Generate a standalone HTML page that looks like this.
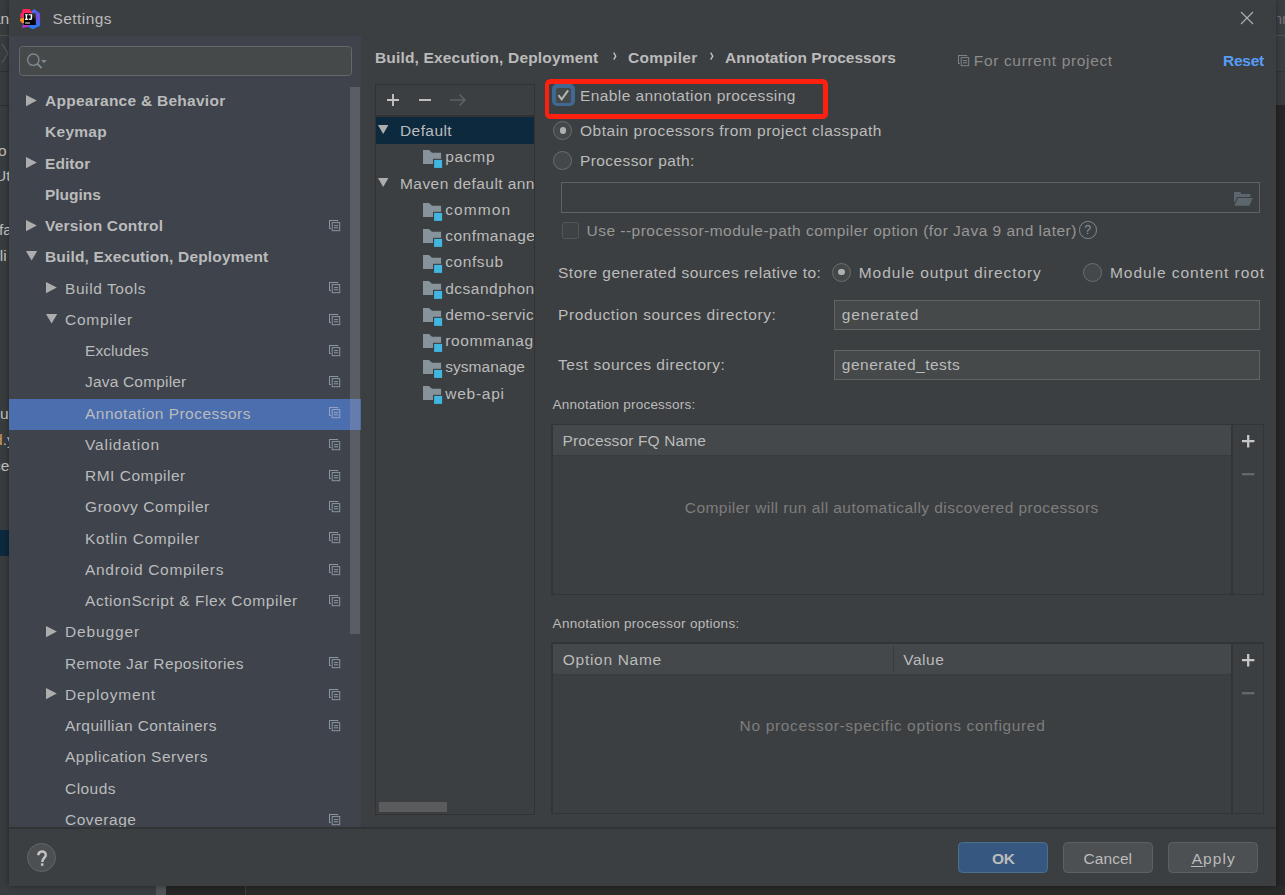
<!DOCTYPE html>
<html><head><meta charset="utf-8"><title>Settings</title>
<style>
html,body{margin:0;padding:0;background:#2b2b2b;overflow:hidden;}
body{width:1285px;height:895px;position:relative;overflow:hidden;font-family:"Liberation Sans",sans-serif;font-size:15.5px;color:#bbbbbb;}
.a{position:absolute;box-sizing:border-box;}
.t{position:absolute;white-space:nowrap;z-index:1;}
svg{position:absolute;overflow:visible;}
</style></head><body>
<!-- ===== IDE behind the dialog ===== -->
<div class="a" style="left:0;top:0;width:1285px;height:895px;background:#3c3f41;"></div>
<!-- left strip -->
<div class="a" style="left:0;top:0;width:9px;height:886px;background:#393c3e;"></div>
<div class="a" style="left:0;top:35px;width:9px;height:1px;background:#4f5254;"></div>
<div class="a" style="left:0;top:71px;width:9px;height:1px;background:#2c2e2f;"></div>
<div class="a" style="left:0;top:105px;width:9px;height:1px;background:#2c2e2f;"></div>
<div class="a" style="left:0;top:530px;width:9px;height:26px;background:#0d293e;"></div>
<div class="a" style="left:0;top:0;width:9px;height:886px;overflow:hidden;">
<div class="t" style="line-height:20px;height:20px;left:-8px;top:9px;font-size:15.5px;">an</div>
<div class="t" style="line-height:20px;height:20px;left:-5.5px;top:140.5px;font-size:15.5px;">lo</div>
<div class="t" style="line-height:20px;height:20px;left:-5px;top:165.5px;font-size:15.5px;">Ut</div>
<div class="t" style="line-height:20px;height:20px;left:-1px;top:219.5px;font-size:15.5px;">fa</div>
<div class="t" style="line-height:20px;height:20px;left:-10.5px;top:245.5px;font-size:15.5px;">Ali</div>
<div class="t" style="line-height:20px;height:20px;left:-8.5px;top:403.5px;font-size:15.5px;">our</div>
<div class="t" style="line-height:20px;height:20px;left:-6px;top:429.5px;font-size:15.5px;color:#a8adb0;"><span style="color:#cc9a62">d</span>.y</div>
<div class="t" style="line-height:20px;height:20px;left:-7px;top:455.5px;font-size:15.5px;">ce</div>
</div>
<svg style="left:0;top:42px;" width="9" height="22"><path d="M2 1.8 L8 11.3 L2 20.8" fill="none" stroke="#565a5c" stroke-width="1.2"/></svg>
<!-- right strip -->
<div class="a" style="left:1276px;top:35px;width:9px;height:1px;background:#515151;"></div>
<div class="a" style="left:1276px;top:71px;width:9px;height:1px;background:#323232;"></div>
<div class="a" style="left:1276px;top:72px;width:9px;height:33px;background:#393b3d;"></div>
<div class="a" style="left:1276px;top:105px;width:9px;height:790px;background:#262626;"></div>
<div class="a" style="left:1276.5px;top:0;width:9px;height:40px;overflow:hidden;"><div class="t" style="line-height:20px;height:20px;left:-3px;top:8.5px;font-size:15.5px;color:#6e7071;">nr</div></div>
<!-- bottom strip -->
<div class="a" style="left:0;top:886px;width:157px;height:9px;background:#3a3d3f;"></div>
<div class="a" style="left:156.4px;top:886px;width:9.3px;height:9px;background:#505456;"></div>
<div class="a" style="left:165.7px;top:886px;width:1120px;height:9px;background:#272727;"></div>
<div class="a" style="left:246px;top:886px;width:1039px;height:9px;background:#2a2a2a;"></div>
<div class="a" style="left:245px;top:886px;width:1px;height:9px;background:#3e3e3e;"></div>
<!-- ===== dialog ===== -->
<div class="a" style="left:9px;top:0;width:1267px;height:886px;background:#3c3f41;box-shadow:0 0 6px rgba(0,0,0,0.4);"></div>
<!-- app icon -->
<svg style="left:16px;top:4px;" width="30" height="30" viewBox="0 0 895 895">
<defs><linearGradient id="ijb" x1="0" y1="0" x2="0" y2="1"><stop offset="0" stop-color="#3a70f3"/><stop offset="0.42" stop-color="#7a4ce0"/><stop offset="0.8" stop-color="#3273f5"/><stop offset="1" stop-color="#2f7df7"/></linearGradient>
<linearGradient id="ijk" x1="1" y1="0" x2="0.3" y2="0.7"><stop offset="0" stop-color="#4a4a4a"/><stop offset="0.55" stop-color="#0a0a0a"/><stop offset="1" stop-color="#000"/></linearGradient>
<linearGradient id="ijp" x1="0" y1="0" x2="0" y2="1"><stop offset="0" stop-color="#ff2650"/><stop offset="1" stop-color="#f02a7a"/></linearGradient></defs>
<polygon points="205,146 400,152 478,240 478,300 250,300 250,425 118,388 138,300 172,250" fill="url(#ijp)"/>
<polygon points="250,412 250,565 188,572 116,492 138,418" fill="#fc8a1c"/>
<polygon points="540,146 718,285 718,648 492,750 356,674 420,615 580,615 580,285 470,285 470,212" fill="url(#ijb)"/>
<polygon points="245,595 430,615 360,676 172,718 198,640" fill="#b036cc"/>
<rect x="240" y="274" width="352" height="352" fill="url(#ijk)"/>
<path d="M266 303h88v36h-22v100h22v36h-88v-36h22v-100h-22z" fill="#fff"/>
<path d="M376 303h106v120c0 38-24 54-58 54-30 0-48-10-60-28l28-26c8 10 16 16 28 16 12 0 18-6 18-22v-78h-62z" fill="#fff"/>
<rect x="270" y="545" width="146" height="44" fill="#a6a6a6"/>
</svg>
<!-- close X -->
<svg style="left:1240px;top:11px;" width="14" height="14"><path d="M1 1 L13 13 M13 1 L1 13" stroke="#b0b0b0" stroke-width="1.1" fill="none"/></svg>
<!-- sidebar -->
<div class="a" style="left:9px;top:36px;width:352px;height:792px;background:#3e434c;"></div>
<!-- search box -->
<div class="a" style="left:18.9px;top:45.9px;width:333px;height:30.5px;background:#45494a;border:1.3px solid #666869;border-radius:3.5px;"></div>
<svg style="left:26px;top:52px;" width="24" height="20"><circle cx="7.3" cy="7.7" r="5.7" fill="none" stroke="#7f8a91" stroke-width="1.35"/><path d="M11.4 11.9 L15.6 16" stroke="#7f8a91" stroke-width="1.8" fill="none"/><path d="M15.1 8.1 h5.6 l-2.8 3.2z" fill="#7f8a91"/></svg>
<!-- sidebar selection -->
<div class="a" style="left:9px;top:399px;width:352px;height:31px;background:#4b6eaf;"></div>
<!-- sidebar scrollbar thumb -->
<div class="a" style="left:350px;top:87px;width:10px;height:546.6px;background:rgba(166,166,166,0.28);z-index:3;"></div>
<!-- footer separator -->
<div class="a" style="left:9px;top:827px;width:1267px;height:1.5px;background:#313335;z-index:4;"></div>
<!-- middle list panel -->
<div class="a" style="left:375px;top:84px;width:159.6px;height:730.6px;border:1px solid #323232;background:#3c3f41;"></div>
<div class="a" style="left:376px;top:115px;width:157.6px;height:1.6px;background:#323232;"></div>
<div class="a" style="left:376px;top:117px;width:157.6px;height:26.6px;background:#0d293e;"></div>
<div class="a" style="left:378.6px;top:801.9px;width:68.3px;height:9.9px;background:#595b5d;"></div>
<!-- toolbar icons -->
<svg style="left:386px;top:93px;" width="14" height="14"><path d="M7 1 V13 M1 7 H13" stroke="#c3c3c3" stroke-width="1.9" fill="none"/></svg>
<svg style="left:418px;top:93px;" width="14" height="14"><path d="M1 7 H13" stroke="#c3c3c3" stroke-width="1.9" fill="none"/></svg>
<svg style="left:449px;top:92px;" width="18" height="16"><path d="M1 8 H16 M10.5 2.5 L16 8 L10.5 13.5" stroke="#5e6163" stroke-width="1.6" fill="none"/></svg>
<div class="t" style="left:52.4px;top:10px;font-size:15.5px;line-height:17px;height:17px;letter-spacing:0.444px;">Settings</div>
<div class="t" style="left:45.0px;top:92px;font-size:15.5px;line-height:17px;height:17px;font-weight:700;letter-spacing:0.266px;z-index:2;">Appearance &amp; Behavior</div>
<div class="t" style="left:45.0px;top:123px;font-size:15.5px;line-height:17px;height:17px;font-weight:700;letter-spacing:0.281px;z-index:2;">Keymap</div>
<div class="t" style="left:45.0px;top:155px;font-size:15.5px;line-height:17px;height:17px;font-weight:700;letter-spacing:0.084px;z-index:2;">Editor</div>
<div class="t" style="left:45.0px;top:186px;font-size:15.5px;line-height:17px;height:17px;font-weight:700;letter-spacing:-0.011px;z-index:2;">Plugins</div>
<div class="t" style="left:45.0px;top:217px;font-size:15.5px;line-height:17px;height:17px;font-weight:700;letter-spacing:0.186px;z-index:2;">Version Control</div>
<div class="t" style="left:45.0px;top:248px;font-size:15.5px;line-height:17px;height:17px;font-weight:700;letter-spacing:0.167px;z-index:2;">Build, Execution, Deployment</div>
<div class="t" style="left:65.0px;top:280px;font-size:15.5px;line-height:17px;height:17px;letter-spacing:0.577px;z-index:2;">Build Tools</div>
<div class="t" style="left:65.0px;top:311px;font-size:15.5px;line-height:17px;height:17px;letter-spacing:0.750px;z-index:2;">Compiler</div>
<div class="t" style="left:85.0px;top:342px;font-size:15.5px;line-height:17px;height:17px;letter-spacing:0.078px;z-index:2;">Excludes</div>
<div class="t" style="left:85.0px;top:373px;font-size:15.5px;line-height:17px;height:17px;letter-spacing:0.184px;z-index:2;">Java Compiler</div>
<div class="t" style="left:85.0px;top:405px;font-size:15.5px;line-height:17px;height:17px;letter-spacing:0.475px;z-index:2;">Annotation Processors</div>
<div class="t" style="left:85.0px;top:436px;font-size:15.5px;line-height:17px;height:17px;letter-spacing:0.793px;z-index:2;">Validation</div>
<div class="t" style="left:85.0px;top:467px;font-size:15.5px;line-height:17px;height:17px;letter-spacing:0.503px;z-index:2;">RMI Compiler</div>
<div class="t" style="left:85.0px;top:498px;font-size:15.5px;line-height:17px;height:17px;letter-spacing:0.570px;z-index:2;">Groovy Compiler</div>
<div class="t" style="left:85.0px;top:530px;font-size:15.5px;line-height:17px;height:17px;letter-spacing:0.654px;z-index:2;">Kotlin Compiler</div>
<div class="t" style="left:85.0px;top:561px;font-size:15.5px;line-height:17px;height:17px;letter-spacing:0.685px;z-index:2;">Android Compilers</div>
<div class="t" style="left:85.0px;top:592px;font-size:15.5px;line-height:17px;height:17px;letter-spacing:0.556px;z-index:2;">ActionScript &amp; Flex Compiler</div>
<div class="t" style="left:65.0px;top:623px;font-size:15.5px;line-height:17px;height:17px;letter-spacing:0.884px;z-index:2;">Debugger</div>
<div class="t" style="left:65.0px;top:655px;font-size:15.5px;line-height:17px;height:17px;letter-spacing:0.358px;z-index:2;">Remote Jar Repositories</div>
<div class="t" style="left:65.0px;top:686px;font-size:15.5px;line-height:17px;height:17px;letter-spacing:0.830px;z-index:2;">Deployment</div>
<div class="t" style="left:65.0px;top:717px;font-size:15.5px;line-height:17px;height:17px;letter-spacing:0.421px;z-index:2;">Arquillian Containers</div>
<div class="t" style="left:65.0px;top:748px;font-size:15.5px;line-height:17px;height:17px;letter-spacing:0.499px;z-index:2;">Application Servers</div>
<div class="t" style="left:65.0px;top:780px;font-size:15.5px;line-height:17px;height:17px;letter-spacing:0.441px;z-index:2;">Clouds</div>
<div class="t" style="left:65.0px;top:811px;font-size:15.5px;line-height:17px;height:17px;letter-spacing:0.530px;z-index:2;">Coverage</div>
<div class="t" style="left:375.0px;top:49px;font-size:15.5px;line-height:17px;height:17px;font-weight:700;letter-spacing:0.167px;">Build, Execution, Deployment</div>
<div class="t" style="left:628.0px;top:49px;font-size:15.5px;line-height:17px;height:17px;font-weight:700;letter-spacing:0.288px;">Compiler</div>
<div class="t" style="left:725.0px;top:49px;font-size:15.5px;line-height:17px;height:17px;font-weight:700;letter-spacing:0.019px;">Annotation Processors</div>
<div class="t" style="left:973.8px;top:52px;font-size:15.5px;line-height:17px;height:17px;color:#8c8c8c;letter-spacing:0.653px;">For current project</div>
<div class="t" style="left:1223.0px;top:52px;font-size:15.5px;line-height:17px;height:17px;font-weight:700;color:#589df6;letter-spacing:-0.240px;">Reset</div>
<div class="t" style="left:400.0px;top:122px;font-size:15.5px;line-height:17px;height:17px;letter-spacing:0.409px;">Default</div>
<div class="t" style="left:445.2px;top:148px;font-size:15.5px;line-height:17px;height:17px;letter-spacing:0.722px;">pacmp</div>
<div class="t" style="left:400.0px;top:175px;font-size:15.5px;line-height:17px;height:17px;letter-spacing:0.433px;width:134.0px;overflow:hidden;">Maven default annotation processors profile</div>
<div class="t" style="left:445.2px;top:201px;font-size:15.5px;line-height:17px;height:17px;letter-spacing:1.103px;">common</div>
<div class="t" style="left:445.2px;top:227px;font-size:15.5px;line-height:17px;height:17px;letter-spacing:0.490px;width:88.8px;overflow:hidden;">confmanagement</div>
<div class="t" style="left:445.2px;top:253px;font-size:15.5px;line-height:17px;height:17px;letter-spacing:0.592px;">confsub</div>
<div class="t" style="left:445.2px;top:280px;font-size:15.5px;line-height:17px;height:17px;letter-spacing:0.498px;width:88.8px;overflow:hidden;">dcsandphone</div>
<div class="t" style="left:445.2px;top:306px;font-size:15.5px;line-height:17px;height:17px;letter-spacing:0.407px;width:88.8px;overflow:hidden;">demo-service</div>
<div class="t" style="left:445.2px;top:332px;font-size:15.5px;line-height:17px;height:17px;letter-spacing:0.653px;width:88.8px;overflow:hidden;">roommanage</div>
<div class="t" style="left:445.2px;top:358px;font-size:15.5px;line-height:17px;height:17px;letter-spacing:0.060px;">sysmanage</div>
<div class="t" style="left:445.2px;top:385px;font-size:15.5px;line-height:17px;height:17px;letter-spacing:0.759px;">web-api</div>
<div class="t" style="left:580.0px;top:87px;font-size:15.5px;line-height:17px;height:17px;letter-spacing:0.413px;">Enable annotation processing</div>
<div class="t" style="left:580.0px;top:122px;font-size:15.5px;line-height:17px;height:17px;letter-spacing:0.507px;">Obtain processors from project classpath</div>
<div class="t" style="left:580.0px;top:152px;font-size:15.5px;line-height:17px;height:17px;letter-spacing:0.410px;">Processor path:</div>
<div class="t" style="left:586.5px;top:222px;font-size:15.5px;line-height:17px;height:17px;color:#979797;letter-spacing:0.485px;">Use --processor-module-path compiler option (for Java 9 and later)</div>
<div class="t" style="left:558.0px;top:264px;font-size:15.5px;line-height:17px;height:17px;letter-spacing:0.496px;">Store generated sources relative to:</div>
<div class="t" style="left:858.8px;top:264px;font-size:15.5px;line-height:17px;height:17px;letter-spacing:0.910px;">Module output directory</div>
<div class="t" style="left:1110.0px;top:264px;font-size:15.5px;line-height:17px;height:17px;letter-spacing:0.954px;">Module content root</div>
<div class="t" style="left:558.0px;top:306px;font-size:15.5px;line-height:17px;height:17px;letter-spacing:0.611px;">Production sources directory:</div>
<div class="t" style="left:841.8px;top:306px;font-size:15.5px;line-height:17px;height:17px;letter-spacing:0.833px;">generated</div>
<div class="t" style="left:558.0px;top:356px;font-size:15.5px;line-height:17px;height:17px;letter-spacing:0.539px;">Test sources directory:</div>
<div class="t" style="left:841.8px;top:356px;font-size:15.5px;line-height:17px;height:17px;letter-spacing:0.493px;">generated_tests</div>
<div class="t" style="left:552.6px;top:397px;font-size:13.5px;line-height:15px;height:15px;letter-spacing:0.215px;">Annotation processors:</div>
<div class="t" style="left:562.6px;top:432px;font-size:15.5px;line-height:17px;height:17px;letter-spacing:0.129px;">Processor FQ Name</div>
<div class="t" style="left:684.8px;top:499px;font-size:15.5px;line-height:17px;height:17px;color:#7d7d7d;letter-spacing:0.446px;">Compiler will run all automatically discovered processors</div>
<div class="t" style="left:552.6px;top:616px;font-size:13.5px;line-height:15px;height:15px;letter-spacing:0.285px;">Annotation processor options:</div>
<div class="t" style="left:562.8px;top:651px;font-size:15.5px;line-height:17px;height:17px;letter-spacing:0.707px;">Option Name</div>
<div class="t" style="left:903.2px;top:651px;font-size:15.5px;line-height:17px;height:17px;letter-spacing:0.556px;">Value</div>
<div class="t" style="left:739.6px;top:717px;font-size:15.5px;line-height:17px;height:17px;color:#7d7d7d;letter-spacing:0.645px;">No processor-specific options configured</div>
<div class="t" style="left:992.0px;top:850px;font-size:15.5px;line-height:17px;height:17px;font-weight:700;letter-spacing:-0.268px;z-index:6;">OK</div>
<div class="t" style="left:1083.6px;top:850px;font-size:15.5px;line-height:17px;height:17px;letter-spacing:0.044px;z-index:6;">Cancel</div>
<div class="t" style="left:1191.7px;top:850px;font-size:15.5px;line-height:17px;height:17px;letter-spacing:1.081px;z-index:6;">Apply</div>
<svg style="left:26.0px;top:94.6px;z-index:2;" width="12" height="12"><path d="M0 0 V11.2 L10.8 5.6z" fill="#adadad"/></svg>
<svg style="left:26.0px;top:157.1px;z-index:2;" width="12" height="12"><path d="M0 0 V11.2 L10.8 5.6z" fill="#adadad"/></svg>
<svg style="left:26.0px;top:219.6px;z-index:2;" width="12" height="12"><path d="M0 0 V11.2 L10.8 5.6z" fill="#adadad"/></svg>
<svg style="left:26.0px;top:251.0px;z-index:2;" width="12" height="10"><path d="M0 0 H11.2 L5.6 9.6z" fill="#adadad"/></svg>
<svg style="left:46.3px;top:282.1px;z-index:2;" width="12" height="12"><path d="M0 0 V11.2 L10.8 5.6z" fill="#adadad"/></svg>
<svg style="left:46.3px;top:313.5px;z-index:2;" width="12" height="10"><path d="M0 0 H11.2 L5.6 9.6z" fill="#adadad"/></svg>
<svg style="left:46.3px;top:625.9px;z-index:2;" width="12" height="12"><path d="M0 0 V11.2 L10.8 5.6z" fill="#adadad"/></svg>
<svg style="left:46.3px;top:688.4px;z-index:2;" width="12" height="12"><path d="M0 0 V11.2 L10.8 5.6z" fill="#adadad"/></svg>
<svg style="left:328.9px;top:219.9px;z-index:2;" width="12" height="12" viewBox="0 0 12 12"><rect x="0.5" y="0.5" width="8.2" height="8" fill="none" stroke="#8b959c" stroke-width="1"/><rect x="1.9" y="1.3" width="9.6" height="10.2" fill="#3e434c"/><rect x="3.2" y="2.6" width="7.5" height="8.1" fill="none" stroke="#8b959c" stroke-width="1"/><rect x="5" y="5.1" width="4.2" height="1" fill="#8b959c"/><rect x="5" y="7" width="4.2" height="1.4" fill="#8b959c" opacity="0.75"/></svg>
<svg style="left:328.9px;top:282.4px;z-index:2;" width="12" height="12" viewBox="0 0 12 12"><rect x="0.5" y="0.5" width="8.2" height="8" fill="none" stroke="#8b959c" stroke-width="1"/><rect x="1.9" y="1.3" width="9.6" height="10.2" fill="#3e434c"/><rect x="3.2" y="2.6" width="7.5" height="8.1" fill="none" stroke="#8b959c" stroke-width="1"/><rect x="5" y="5.1" width="4.2" height="1" fill="#8b959c"/><rect x="5" y="7" width="4.2" height="1.4" fill="#8b959c" opacity="0.75"/></svg>
<svg style="left:328.9px;top:313.7px;z-index:2;" width="12" height="12" viewBox="0 0 12 12"><rect x="0.5" y="0.5" width="8.2" height="8" fill="none" stroke="#8b959c" stroke-width="1"/><rect x="1.9" y="1.3" width="9.6" height="10.2" fill="#3e434c"/><rect x="3.2" y="2.6" width="7.5" height="8.1" fill="none" stroke="#8b959c" stroke-width="1"/><rect x="5" y="5.1" width="4.2" height="1" fill="#8b959c"/><rect x="5" y="7" width="4.2" height="1.4" fill="#8b959c" opacity="0.75"/></svg>
<svg style="left:328.9px;top:344.9px;z-index:2;" width="12" height="12" viewBox="0 0 12 12"><rect x="0.5" y="0.5" width="8.2" height="8" fill="none" stroke="#8b959c" stroke-width="1"/><rect x="1.9" y="1.3" width="9.6" height="10.2" fill="#3e434c"/><rect x="3.2" y="2.6" width="7.5" height="8.1" fill="none" stroke="#8b959c" stroke-width="1"/><rect x="5" y="5.1" width="4.2" height="1" fill="#8b959c"/><rect x="5" y="7" width="4.2" height="1.4" fill="#8b959c" opacity="0.75"/></svg>
<svg style="left:328.9px;top:376.2px;z-index:2;" width="12" height="12" viewBox="0 0 12 12"><rect x="0.5" y="0.5" width="8.2" height="8" fill="none" stroke="#8b959c" stroke-width="1"/><rect x="1.9" y="1.3" width="9.6" height="10.2" fill="#3e434c"/><rect x="3.2" y="2.6" width="7.5" height="8.1" fill="none" stroke="#8b959c" stroke-width="1"/><rect x="5" y="5.1" width="4.2" height="1" fill="#8b959c"/><rect x="5" y="7" width="4.2" height="1.4" fill="#8b959c" opacity="0.75"/></svg>
<svg style="left:328.9px;top:407.4px;z-index:2;" width="12" height="12" viewBox="0 0 12 12"><rect x="0.5" y="0.5" width="8.2" height="8" fill="none" stroke="#93a4bf" stroke-width="1"/><rect x="1.9" y="1.3" width="9.6" height="10.2" fill="#4b6eaf"/><rect x="3.2" y="2.6" width="7.5" height="8.1" fill="none" stroke="#93a4bf" stroke-width="1"/><rect x="5" y="5.1" width="4.2" height="1" fill="#93a4bf"/><rect x="5" y="7" width="4.2" height="1.4" fill="#93a4bf" opacity="0.75"/></svg>
<svg style="left:328.9px;top:438.7px;z-index:2;" width="12" height="12" viewBox="0 0 12 12"><rect x="0.5" y="0.5" width="8.2" height="8" fill="none" stroke="#8b959c" stroke-width="1"/><rect x="1.9" y="1.3" width="9.6" height="10.2" fill="#3e434c"/><rect x="3.2" y="2.6" width="7.5" height="8.1" fill="none" stroke="#8b959c" stroke-width="1"/><rect x="5" y="5.1" width="4.2" height="1" fill="#8b959c"/><rect x="5" y="7" width="4.2" height="1.4" fill="#8b959c" opacity="0.75"/></svg>
<svg style="left:328.9px;top:469.9px;z-index:2;" width="12" height="12" viewBox="0 0 12 12"><rect x="0.5" y="0.5" width="8.2" height="8" fill="none" stroke="#8b959c" stroke-width="1"/><rect x="1.9" y="1.3" width="9.6" height="10.2" fill="#3e434c"/><rect x="3.2" y="2.6" width="7.5" height="8.1" fill="none" stroke="#8b959c" stroke-width="1"/><rect x="5" y="5.1" width="4.2" height="1" fill="#8b959c"/><rect x="5" y="7" width="4.2" height="1.4" fill="#8b959c" opacity="0.75"/></svg>
<svg style="left:328.9px;top:501.2px;z-index:2;" width="12" height="12" viewBox="0 0 12 12"><rect x="0.5" y="0.5" width="8.2" height="8" fill="none" stroke="#8b959c" stroke-width="1"/><rect x="1.9" y="1.3" width="9.6" height="10.2" fill="#3e434c"/><rect x="3.2" y="2.6" width="7.5" height="8.1" fill="none" stroke="#8b959c" stroke-width="1"/><rect x="5" y="5.1" width="4.2" height="1" fill="#8b959c"/><rect x="5" y="7" width="4.2" height="1.4" fill="#8b959c" opacity="0.75"/></svg>
<svg style="left:328.9px;top:532.4px;z-index:2;" width="12" height="12" viewBox="0 0 12 12"><rect x="0.5" y="0.5" width="8.2" height="8" fill="none" stroke="#8b959c" stroke-width="1"/><rect x="1.9" y="1.3" width="9.6" height="10.2" fill="#3e434c"/><rect x="3.2" y="2.6" width="7.5" height="8.1" fill="none" stroke="#8b959c" stroke-width="1"/><rect x="5" y="5.1" width="4.2" height="1" fill="#8b959c"/><rect x="5" y="7" width="4.2" height="1.4" fill="#8b959c" opacity="0.75"/></svg>
<svg style="left:328.9px;top:563.7px;z-index:2;" width="12" height="12" viewBox="0 0 12 12"><rect x="0.5" y="0.5" width="8.2" height="8" fill="none" stroke="#8b959c" stroke-width="1"/><rect x="1.9" y="1.3" width="9.6" height="10.2" fill="#3e434c"/><rect x="3.2" y="2.6" width="7.5" height="8.1" fill="none" stroke="#8b959c" stroke-width="1"/><rect x="5" y="5.1" width="4.2" height="1" fill="#8b959c"/><rect x="5" y="7" width="4.2" height="1.4" fill="#8b959c" opacity="0.75"/></svg>
<svg style="left:328.9px;top:594.9px;z-index:2;" width="12" height="12" viewBox="0 0 12 12"><rect x="0.5" y="0.5" width="8.2" height="8" fill="none" stroke="#8b959c" stroke-width="1"/><rect x="1.9" y="1.3" width="9.6" height="10.2" fill="#3e434c"/><rect x="3.2" y="2.6" width="7.5" height="8.1" fill="none" stroke="#8b959c" stroke-width="1"/><rect x="5" y="5.1" width="4.2" height="1" fill="#8b959c"/><rect x="5" y="7" width="4.2" height="1.4" fill="#8b959c" opacity="0.75"/></svg>
<svg style="left:328.9px;top:657.4px;z-index:2;" width="12" height="12" viewBox="0 0 12 12"><rect x="0.5" y="0.5" width="8.2" height="8" fill="none" stroke="#8b959c" stroke-width="1"/><rect x="1.9" y="1.3" width="9.6" height="10.2" fill="#3e434c"/><rect x="3.2" y="2.6" width="7.5" height="8.1" fill="none" stroke="#8b959c" stroke-width="1"/><rect x="5" y="5.1" width="4.2" height="1" fill="#8b959c"/><rect x="5" y="7" width="4.2" height="1.4" fill="#8b959c" opacity="0.75"/></svg>
<svg style="left:328.9px;top:688.7px;z-index:2;" width="12" height="12" viewBox="0 0 12 12"><rect x="0.5" y="0.5" width="8.2" height="8" fill="none" stroke="#8b959c" stroke-width="1"/><rect x="1.9" y="1.3" width="9.6" height="10.2" fill="#3e434c"/><rect x="3.2" y="2.6" width="7.5" height="8.1" fill="none" stroke="#8b959c" stroke-width="1"/><rect x="5" y="5.1" width="4.2" height="1" fill="#8b959c"/><rect x="5" y="7" width="4.2" height="1.4" fill="#8b959c" opacity="0.75"/></svg>
<svg style="left:328.9px;top:719.9px;z-index:2;" width="12" height="12" viewBox="0 0 12 12"><rect x="0.5" y="0.5" width="8.2" height="8" fill="none" stroke="#8b959c" stroke-width="1"/><rect x="1.9" y="1.3" width="9.6" height="10.2" fill="#3e434c"/><rect x="3.2" y="2.6" width="7.5" height="8.1" fill="none" stroke="#8b959c" stroke-width="1"/><rect x="5" y="5.1" width="4.2" height="1" fill="#8b959c"/><rect x="5" y="7" width="4.2" height="1.4" fill="#8b959c" opacity="0.75"/></svg>
<svg style="left:328.9px;top:813.7px;z-index:2;" width="12" height="12" viewBox="0 0 12 12"><rect x="0.5" y="0.5" width="8.2" height="8" fill="none" stroke="#8b959c" stroke-width="1"/><rect x="1.9" y="1.3" width="9.6" height="10.2" fill="#3e434c"/><rect x="3.2" y="2.6" width="7.5" height="8.1" fill="none" stroke="#8b959c" stroke-width="1"/><rect x="5" y="5.1" width="4.2" height="1" fill="#8b959c"/><rect x="5" y="7" width="4.2" height="1.4" fill="#8b959c" opacity="0.75"/></svg>
<div class="a" style="left:9px;top:828.5px;width:1267px;height:57.5px;background:#3c3f41;z-index:3;"></div>
<svg style="left:957.8px;top:55px;" width="12" height="12" viewBox="0 0 12 12"><rect x="0.5" y="0.5" width="8.2" height="8" fill="none" stroke="#7a848a" stroke-width="1"/><rect x="1.9" y="1.3" width="9.6" height="10.2" fill="#3c3f41"/><rect x="3.2" y="2.6" width="7.5" height="8.1" fill="none" stroke="#7a848a" stroke-width="1"/><rect x="5" y="5.1" width="4.2" height="1" fill="#7a848a"/><rect x="5" y="7" width="4.2" height="1.4" fill="#7a848a" opacity="0.75"/></svg>
<svg style="left:612.7px;top:52.2px;" width="5" height="9"><path d="M0.7 0.7 L2.75 4.2 L0.7 7.7" fill="none" stroke="#c4c4c4" stroke-width="1.35"/></svg>
<svg style="left:709.7px;top:52.2px;" width="5" height="9"><path d="M0.7 0.7 L2.75 4.2 L0.7 7.7" fill="none" stroke="#c4c4c4" stroke-width="1.35"/></svg>
<svg style="left:378.2px;top:125.4px;" width="11" height="10"><path d="M0 0 H10.4 L5.2 9z" fill="#adadad"/></svg>
<svg style="left:378.2px;top:177.9px;" width="11" height="10"><path d="M0 0 H10.4 L5.2 9z" fill="#adadad"/></svg>
<svg style="left:423px;top:150.2px;" width="20" height="19" viewBox="0 0 20 19"><path d="M0 0 H6 L9 2.7 H18.1 V14 H0z" fill="#87939a"/><rect x="10" y="8.8" width="10" height="10.2" fill="#3c3f41"/><rect x="11.1" y="9.9" width="8" height="8" fill="#40b6e0"/></svg>
<svg style="left:423px;top:202.7px;" width="20" height="19" viewBox="0 0 20 19"><path d="M0 0 H6 L9 2.7 H18.1 V14 H0z" fill="#87939a"/><rect x="10" y="8.8" width="10" height="10.2" fill="#3c3f41"/><rect x="11.1" y="9.9" width="8" height="8" fill="#40b6e0"/></svg>
<svg style="left:423px;top:228.9px;" width="20" height="19" viewBox="0 0 20 19"><path d="M0 0 H6 L9 2.7 H18.1 V14 H0z" fill="#87939a"/><rect x="10" y="8.8" width="10" height="10.2" fill="#3c3f41"/><rect x="11.1" y="9.9" width="8" height="8" fill="#40b6e0"/></svg>
<svg style="left:423px;top:255.2px;" width="20" height="19" viewBox="0 0 20 19"><path d="M0 0 H6 L9 2.7 H18.1 V14 H0z" fill="#87939a"/><rect x="10" y="8.8" width="10" height="10.2" fill="#3c3f41"/><rect x="11.1" y="9.9" width="8" height="8" fill="#40b6e0"/></svg>
<svg style="left:423px;top:281.4px;" width="20" height="19" viewBox="0 0 20 19"><path d="M0 0 H6 L9 2.7 H18.1 V14 H0z" fill="#87939a"/><rect x="10" y="8.8" width="10" height="10.2" fill="#3c3f41"/><rect x="11.1" y="9.9" width="8" height="8" fill="#40b6e0"/></svg>
<svg style="left:423px;top:307.7px;" width="20" height="19" viewBox="0 0 20 19"><path d="M0 0 H6 L9 2.7 H18.1 V14 H0z" fill="#87939a"/><rect x="10" y="8.8" width="10" height="10.2" fill="#3c3f41"/><rect x="11.1" y="9.9" width="8" height="8" fill="#40b6e0"/></svg>
<svg style="left:423px;top:333.9px;" width="20" height="19" viewBox="0 0 20 19"><path d="M0 0 H6 L9 2.7 H18.1 V14 H0z" fill="#87939a"/><rect x="10" y="8.8" width="10" height="10.2" fill="#3c3f41"/><rect x="11.1" y="9.9" width="8" height="8" fill="#40b6e0"/></svg>
<svg style="left:423px;top:360.2px;" width="20" height="19" viewBox="0 0 20 19"><path d="M0 0 H6 L9 2.7 H18.1 V14 H0z" fill="#87939a"/><rect x="10" y="8.8" width="10" height="10.2" fill="#3c3f41"/><rect x="11.1" y="9.9" width="8" height="8" fill="#40b6e0"/></svg>
<svg style="left:423px;top:386.4px;" width="20" height="19" viewBox="0 0 20 19"><path d="M0 0 H6 L9 2.7 H18.1 V14 H0z" fill="#87939a"/><rect x="10" y="8.8" width="10" height="10.2" fill="#3c3f41"/><rect x="11.1" y="9.9" width="8" height="8" fill="#40b6e0"/></svg>
<div class="a" style="left:544.6px;top:79.2px;width:283px;height:39.5px;border:4.5px solid #ff2010;border-width:5.1px 5.4px 5.3px 4.5px;border-radius:5.5px;"></div>
<div class="a" style="left:552.3px;top:84px;width:22.4px;height:22px;background:#3f6892;border-radius:5px;"></div>
<div class="a" style="left:556.1px;top:88px;width:14.8px;height:14.7px;background:#43494a;border-radius:1.5px;"></div>
<svg style="left:556px;top:88px;" width="15" height="15"><path d="M2.4 7.2 L5.7 11.3 L12.1 2.4" fill="none" stroke="#b4b4b4" stroke-width="2.1"/></svg>
<div class="a" style="left:553.3px;top:121.1px;width:19.2px;height:19.2px;border-radius:50%;border:1.5px solid #6c6c6c;background:#43494a;"></div>
<div class="a" style="left:559.6px;top:127.4px;width:6.6px;height:6.6px;border-radius:50%;background:#b0b0b0;"></div>
<div class="a" style="left:553.3px;top:151.1px;width:19.2px;height:19.2px;border-radius:50%;border:1.5px solid #6c6c6c;background:#43494a;"></div>
<div class="a" style="left:832.1px;top:262.6px;width:19.2px;height:19.2px;border-radius:50%;border:1.5px solid #6c6c6c;background:#43494a;"></div>
<div class="a" style="left:838.4px;top:268.9px;width:6.6px;height:6.6px;border-radius:50%;background:#b0b0b0;"></div>
<div class="a" style="left:1083.2px;top:262.6px;width:19.2px;height:19.2px;border-radius:50%;border:1.5px solid #6c6c6c;background:#43494a;"></div>
<div class="a" style="left:561.4px;top:182.4px;width:698.9px;height:30.6px;border:1.6px solid #606364;"></div>
<svg style="left:1234px;top:191.6px;" width="20" height="15" viewBox="0 0 20 15"><path d="M0 0 H6.2 L7.4 2 H16.4 V5 H3.2 L0 11.6z" fill="#5c676d"/><path d="M3.9 6.1 H18.9 L15.2 13.8 H0.4z" fill="#5c676d"/></svg>
<div class="a" style="left:561.7px;top:221.6px;width:17.6px;height:17.5px;border:1.4px solid #545759;border-radius:2.5px;background:#3f4244;"></div>
<div class="a" style="left:1079.3px;top:221.3px;width:17.6px;height:17.6px;border-radius:50%;border:1.3px solid #7f8a91;"></div>
<div class="t" style="line-height:20px;height:20px;left:1084.2px;top:220.2px;font-size:12.5px;color:#8a959c;">?</div>
<div class="a" style="left:834.2px;top:299.6px;width:425.6px;height:30px;background:#45494a;border:1.1px solid #646464;"></div>
<div class="a" style="left:834.2px;top:350.0px;width:425.6px;height:30px;background:#45494a;border:1.1px solid #646464;"></div>
<div class="a" style="left:551px;top:424.0px;width:713px;height:171.4px;border:1px solid #323436;border-left-width:2px;border-top-width:1.0px;"></div>
<div class="a" style="left:553px;top:425.0px;width:678.4px;height:30.0px;background:#44484a;"></div>
<div class="a" style="left:553px;top:455.0px;width:678.4px;height:1px;background:#383b3d;"></div>
<div class="a" style="left:1231.4px;top:424.0px;width:1.5px;height:171.4px;background:#323436;"></div>
<svg style="left:1241.9px;top:434.7px;" width="13" height="13"><path d="M6.2 0 V12.4 M0 6.2 H12.4" stroke="#c7c7c7" stroke-width="2.3" fill="none"/></svg>
<svg style="left:1241.9px;top:467.6px;" width="13" height="13"><path d="M0 6.2 H12.4" stroke="#666869" stroke-width="2.3" fill="none"/></svg>
<div class="a" style="left:551px;top:642.0px;width:713px;height:172.4px;border:1px solid #323436;border-left-width:2px;border-top-width:2.0px;"></div>
<div class="a" style="left:553px;top:644.0px;width:678.4px;height:30.0px;background:#44484a;"></div>
<div class="a" style="left:553px;top:674.0px;width:678.4px;height:1px;background:#383b3d;"></div>
<div class="a" style="left:1231.4px;top:642.0px;width:1.5px;height:172.4px;background:#323436;"></div>
<div class="a" style="left:892.6px;top:646.0px;width:1px;height:26.0px;background:#383b3d;"></div>
<svg style="left:1241.9px;top:653.7px;" width="13" height="13"><path d="M6.2 0 V12.4 M0 6.2 H12.4" stroke="#c7c7c7" stroke-width="2.3" fill="none"/></svg>
<svg style="left:1241.9px;top:686.6px;" width="13" height="13"><path d="M0 6.2 H12.4" stroke="#666869" stroke-width="2.3" fill="none"/></svg>
<div class="a" style="left:957.9px;top:842.2px;width:90.0px;height:30.4px;background:#365880;border:1.2px solid #4c708c;border-radius:4.5px;z-index:5;"></div>
<div class="a" style="left:1062.7px;top:842.2px;width:90.0px;height:30.4px;background:#4c5052;border:1.2px solid #5e6060;border-radius:4.5px;z-index:5;"></div>
<div class="a" style="left:1168.0px;top:842.2px;width:90.0px;height:30.4px;background:#4c5052;border:1.2px solid #5e6060;border-radius:4.5px;z-index:5;"></div>
<div class="a" style="left:1191.2px;top:865.7px;width:11.4px;height:1.2px;background:#bbbbbb;z-index:6;"></div>
<div class="a" style="left:27px;top:842.9px;width:29px;height:29px;border-radius:50%;background:#4c5052;border:1.1px solid #646667;z-index:5;"></div>
<svg style="left:0;top:0;z-index:6;" width="70" height="895"><path d="M38.3 855.2 C38.4 850.4 45.7 850.3 45.8 854.7 C45.9 857.8 42.2 857.9 42.2 862" fill="none" stroke="#c2c2c2" stroke-width="2.5"/><rect x="40.9" y="863.3" width="2.6" height="2.5" fill="#c2c2c2"/></svg>
</body></html>
